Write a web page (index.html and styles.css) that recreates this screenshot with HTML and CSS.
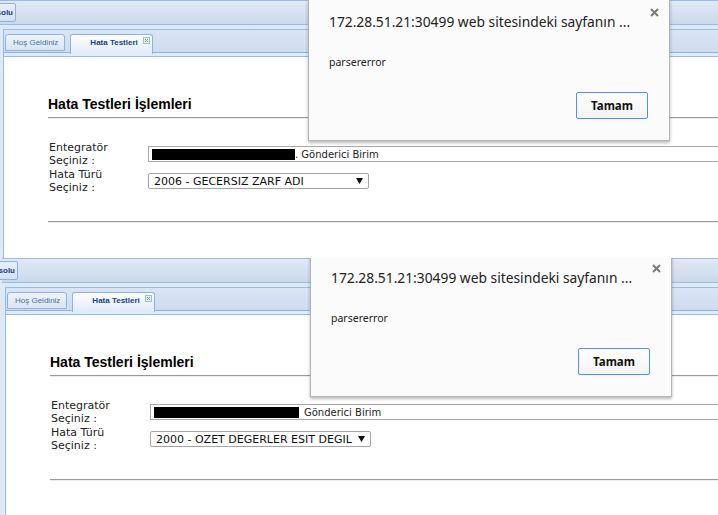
FILE: index.html
```html
<!DOCTYPE html>
<html lang="tr">
<head>
<meta charset="utf-8">
<title>Hata Testleri İşlemleri</title>
<link rel="stylesheet" href="styles.css">
</head>
<body>
<div class="shot shot-a">
  <div class="app">
    <div class="toolbar">
      <div class="tb-clip"><span class="tb-btn">Konsolu</span></div>
    </div>
    <div class="tabpanel">
      <div class="tabstrip">
        <div class="tab">Hoş Geldiniz</div>
        <div class="tab tab-active"><span>Hata Testleri</span><svg class="tab-close" width="7" height="7" viewBox="0 0 7 7"><rect x="0.5" y="0.5" width="6" height="6" fill="#e4ecf6" stroke="#a7b9d3"/><path d="M2 2 L5 5 M5 2 L2 5" stroke="#7d93b5" stroke-width="1"/></svg></div>
      </div>
      <div class="tabspacer"></div>
      <div class="tabbody">
        <h2 class="page-title">Hata Testleri İşlemleri</h2>
        <hr class="rule">
        <div class="form">
          <div class="label">Entegratör<br>Seçiniz :</div>
          <div class="field input"><span class="redact"></span><span class="input-text">. Gönderici Birim</span></div>
          <div class="label">Hata Türü<br>Seçiniz :</div>
          <div class="field select"><span>2006 - GECERSIZ ZARF ADI</span><svg class="arrow" width="7" height="6" viewBox="0 0 7 6"><path d="M0 0 H7 L3.5 6 Z" fill="#111"/></svg></div>
        </div>
        <hr class="rule rule-bottom">
      </div>
    </div>
  </div>
  <div class="dialog">
    <div class="dlg-title">172.28.51.21:30499 web sitesindeki sayfanın ...</div>
    <svg class="dlg-close" width="9" height="9" viewBox="0 0 9 9"><path d="M1 1 L8 8 M8 1 L1 8" stroke="#7a7a7a" stroke-width="2"/></svg>
    <div class="dlg-msg">parsererror</div>
    <div class="dlg-actions"><span class="dlg-btn">Tamam</span></div>
  </div>
</div>
<div class="shot shot-b">
  <div class="app">
    <div class="toolbar">
      <div class="tb-clip"><span class="tb-btn">Konsolu</span></div>
    </div>
    <div class="tabpanel">
      <div class="tabstrip">
        <div class="tab">Hoş Geldiniz</div>
        <div class="tab tab-active"><span>Hata Testleri</span><svg class="tab-close" width="7" height="7" viewBox="0 0 7 7"><rect x="0.5" y="0.5" width="6" height="6" fill="#e4ecf6" stroke="#a7b9d3"/><path d="M2 2 L5 5 M5 2 L2 5" stroke="#7d93b5" stroke-width="1"/></svg></div>
      </div>
      <div class="tabspacer"></div>
      <div class="tabbody">
        <h2 class="page-title">Hata Testleri İşlemleri</h2>
        <hr class="rule">
        <div class="form">
          <div class="label">Entegratör<br>Seçiniz :</div>
          <div class="field input"><span class="redact redact-wide"></span><span class="input-text">Gönderici Birim</span></div>
          <div class="label">Hata Türü<br>Seçiniz :</div>
          <div class="field select"><span>2000 - OZET DEGERLER ESIT DEGIL</span><svg class="arrow" width="7" height="6" viewBox="0 0 7 6"><path d="M0 0 H7 L3.5 6 Z" fill="#111"/></svg></div>
        </div>
        <hr class="rule rule-bottom">
      </div>
    </div>
  </div>
  <div class="dialog">
    <div class="dlg-title">172.28.51.21:30499 web sitesindeki sayfanın ...</div>
    <svg class="dlg-close" width="9" height="9" viewBox="0 0 9 9"><path d="M1 1 L8 8 M8 1 L1 8" stroke="#7a7a7a" stroke-width="2"/></svg>
    <div class="dlg-msg">parsererror</div>
    <div class="dlg-actions"><span class="dlg-btn">Tamam</span></div>
  </div>
</div>
</body>
</html>
```
FILE: styles.css
```css
* { box-sizing: border-box; }
html, body { margin: 0; padding: 0; }
body {
  width: 718px;
  background: #fff;
  font-family: "DejaVu Sans", Verdana, sans-serif;
  color: #222;
}
.shot {
  position: relative;
  overflow: hidden;
  background: #dfe8f6;
}
.shot-a { height: 258px; }
.shot-b { height: 257px; }

.app {
  width: 780px;
  display: flex;
  flex-direction: column;
}
.shot-b .app { margin-left: 2px; }

/* toolbar */
.toolbar {
  height: 25px;
  border-top: 1px solid #99bbe8;
  border-bottom: 1px solid #99bbe8;
  background: linear-gradient(#e0e9f5, #cbd9ec);
  display: flex;
  align-items: flex-start;
  padding-top: 2px;
}
.tb-clip {
  width: 16px;
  flex-shrink: 0;
  display: flex;
  justify-content: flex-end;
}
.tb-btn {
  flex-shrink: 0;
  height: 19px;
  padding: 0 2px 0 4px;
  border: 1px solid #8fb0d9;
  border-radius: 2px;
  background: linear-gradient(#e9f0f9, #d3e0f1);
  font: bold 8px "Liberation Sans", Arial, sans-serif;
  line-height: 17px;
  color: #15428b;
  white-space: nowrap;
}

/* tab panel */
.tabpanel {
  margin: 4px 0 0 3px;
  border-left: 1px solid #99bbe8;
  border-top: 1px solid #99bbe8;
  background: #fff;
}
.tabstrip {
  height: 23px;
  padding: 4px 0 0 1px;
  display: flex;
  align-items: flex-start;
  gap: 5px;
  background: linear-gradient(#dae5f4, #cfdcee);
  border-bottom: 1px solid #8db2e3;
}
.tab {
  height: 17px;
  padding: 0 6px 0 7px;
  border: 1px solid #8db2e3;
  border-radius: 3px 3px 0 0;
  background: linear-gradient(#eef3fa, #d9e5f4);
  font: 8px "Liberation Sans", Arial, sans-serif;
  line-height: 15px;
  color: #4a6fa5;
  white-space: nowrap;
}
.tab-active {
  position: relative;
  z-index: 1;
  height: 20px;
  margin-bottom: -1px;
  padding: 0 2px 0 19px;
  border-bottom: 0;
  background: linear-gradient(#ffffff, #dfeaf8);
  font-weight: bold;
  line-height: 16px;
  color: #15428b;
  display: flex;
  align-items: flex-start;
  gap: 5px;
}
.tab-close { margin-top: 2px; flex-shrink: 0; }
.tabspacer {
  height: 4px;
  background: #deecfd;
  border-bottom: 1px solid #99bbe8;
}
.tabbody {
  background: #fff;
  padding: 39px 0 60px 44px;
}
.page-title {
  margin: 0;
  font: bold 14px/16px "Liberation Sans", Arial, sans-serif;
  color: #000;
}
.rule {
  margin: 5px 0 0;
  height: 0;
  border: 0;
  border-top: 1px solid #9a9a9a;
  border-bottom: 1px solid #eeeeee;
}
.rule-bottom { margin-top: 27px; }

.form {
  margin: 22px 0 0 1px;
  display: grid;
  grid-template-columns: 99px 1fr;
  grid-auto-rows: 26px;
  row-gap: 1px;
  align-items: start;
}
.label {
  font-size: 11px;
  line-height: 13px;
  color: #222;
}
.field {
  margin-top: 5px;
  height: 16px;
  display: flex;
  align-items: center;
  background: #fff;
}
.input {
  border: 1px solid #a9a9a9;
  border-right: 0;
  padding-left: 3px;
}
.redact {
  width: 143px;
  height: 11px;
  background: #000;
  flex-shrink: 0;
}
.redact-wide { width: 145px; margin-right: 5px; }
.input-text {
  font-size: 10px;
  color: #222;
  white-space: nowrap;
}
.select {
  width: 221px;
  border: 1px solid #a6a6a6;
  border-radius: 2px;
  padding: 0 5px 0 5px;
  justify-content: space-between;
  font-size: 11px;
  color: #111;
  white-space: nowrap;
}
.arrow { flex-shrink: 0; }

/* dialog */
.dialog {
  position: absolute;
  z-index: 5;
  left: 308px;
  top: -1px;
  width: 362px;
  padding: 12px 21px 21px 20px;
  background: #fbfbfb;
  border: 1px solid rgba(0, 0, 0, 0.28);
  box-shadow: 0 2px 3px rgba(0, 0, 0, 0.28);
  font-family: "Noto Sans", "Open Sans", sans-serif;
  color: #222;
}
.shot-b .dialog { left: 310px; top: -3px; }
.dlg-title {
  font-size: 13.8px;
  line-height: 20px;
  white-space: nowrap;
}
.dlg-close {
  position: absolute;
  top: 8px;
  right: 10px;
}
.dlg-msg {
  margin-top: 23px;
  font-size: 10.5px;
  line-height: 14px;
}
.dlg-actions {
  margin-top: 23px;
  display: flex;
  justify-content: flex-end;
}
.dlg-btn {
  width: 72px;
  height: 27px;
  border: 1px solid #4d90fe;
  border-radius: 2px;
  background: linear-gradient(#ffffff, #f4f4f4);
  font-weight: bold;
  font-size: 11.5px;
  line-height: 25px;
  text-align: center;
  color: #111;
}
```
